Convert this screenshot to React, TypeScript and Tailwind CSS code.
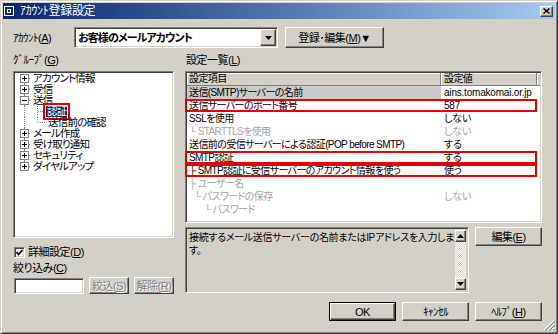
import React from 'react';

const font = "font-['Liberation_Sans','Noto_Sans_CJK_JP',sans-serif] [font-feature-settings:'palt']";
const sunken =
    'border border-t-[#808080] border-l-[#808080] border-b-white border-r-white shadow-[inset_1px_1px_0_#404040,inset_-1px_-1px_0_#d4d0c8]';
const raised =
    'border border-t-white border-l-white border-b-[#404040] border-r-[#404040] shadow-[inset_-1px_-1px_0_#808080] bg-[#d4d0c8]';
const grey = 'text-[#a3a3a3]';

type TreeItem = {
    label: string;
    kind: 'plus' | 'minus' | 'child' | 'lastchild';
    first?: boolean;
    last?: boolean;
    selected?: boolean;
};

const tree: TreeItem[] = [
    { label: 'アカウント情報', kind: 'plus', first: true },
    { label: '受信', kind: 'plus' },
    { label: '送信', kind: 'minus' },
    { label: '認証', kind: 'child', selected: true },
    { label: '送信前の確認', kind: 'lastchild' },
    { label: 'メール作成', kind: 'plus' },
    { label: '受け取り通知', kind: 'plus' },
    { label: 'セキュリティ', kind: 'plus' },
    { label: 'ダイヤルアップ', kind: 'plus', last: true },
];

type Row = {
    name: string;
    value: string;
    indent?: number;
    disabled?: boolean;
    marked?: boolean;
    selected?: boolean;
};

const rows: Row[] = [
    { name: '送信(SMTP)サーバーの名前', value: 'ains.tomakomai.or.jp', selected: true },
    { name: '送信サーバーのポート番号', value: '587', marked: true },
    { name: 'SSLを使用', value: 'しない' },
    { name: '└ STARTTLSを使用', value: 'しない', disabled: true },
    { name: '送信前の受信サーバーによる認証(POP before SMTP)', value: 'する' },
    { name: 'SMTP認証', value: 'する', marked: true },
    { name: '├ SMTP認証に受信サーバーのアカウント情報を使う', value: '使う', marked: true },
    { name: '├ ユーザー名', value: '', disabled: true },
    { name: '└ パスワードの保存', value: 'しない', indent: 5, disabled: true },
    { name: '└ パスワード', value: '', indent: 15, disabled: true },
];

const dot = { stroke: '#808080', strokeWidth: 1, strokeDasharray: '1 1' };

const Gutter: React.FC<{ item: TreeItem }> = ({ item }) => {
    const isChild = item.kind === 'child' || item.kind === 'lastchild';
    if (isChild) {
        return (
            <svg width={30} height={11} className="shrink-0">
                <line x1={8.5} y1={0} x2={8.5} y2={11} {...dot} />
                <line x1={21.5} y1={0} x2={21.5} y2={item.kind === 'lastchild' ? 5.5 : 11} {...dot} />
                <line x1={22} y1={5.5} x2={29} y2={5.5} {...dot} />
            </svg>
        );
    }
    return (
        <svg width={15} height={11} className="shrink-0">
            <line x1={8.5} y1={item.first ? 5.5 : 0} x2={8.5} y2={item.last ? 5.5 : 11} {...dot} />
            <line x1={13} y1={5.5} x2={15} y2={5.5} {...dot} />
            <rect x={4.5} y={1.5} width={8} height={8} fill="#fff" stroke="#808080" />
            <line x1={6} y1={5.5} x2={11} y2={5.5} stroke="#000" />
            {item.kind === 'plus' && <line x1={8.5} y1={3} x2={8.5} y2={8} stroke="#000" />}
        </svg>
    );
};

const Arrow: React.FC<{ up?: boolean }> = ({ up }) => (
    <svg width={7} height={4} viewBox="0 0 7 4">
        <path d={up ? 'M3.5 0 L7 4 L0 4 Z' : 'M0 0 L7 0 L3.5 4 Z'} fill="#000" />
    </svg>
);

const Button: React.FC<{ children: React.ReactNode; className?: string; isDefault?: boolean; disabled?: boolean }> = ({
    children,
    className = '',
    isDefault,
    disabled,
}) => (
    <div className={`${isDefault ? 'border border-black' : ''} ${className}`}>
        <div
            className={`${raised} w-full h-full flex items-center justify-center whitespace-nowrap ${
                disabled ? 'text-[#808080] [text-shadow:1px_1px_0_#fff]' : 'text-black'
            }`}
        >
            {children}
        </div>
    </div>
);

export default function App() {
    return (
        <div className={`${font} w-[558px] h-[334px] relative bg-[#d4d0c8] text-black text-[11px] leading-[12px] tracking-[-0.5px] border border-t-[#d4d0c8] border-l-[#d4d0c8] border-b-[#404040] border-r-[#404040] shadow-[inset_1px_1px_0_#fff,inset_-1px_-1px_0_#808080] flex flex-col overflow-hidden`}>
            {/* title bar */}
            <div className="mx-[2px] mt-[2px] h-[16px] flex items-center bg-linear-to-r from-[#0a246a] to-[#a6caf0] pr-[2px]">
                <div className="ml-[1px] w-[10px] h-[10px] border border-white bg-[#0a246a] flex items-center justify-center">
                    <div className="w-[4px] h-[4px] border border-white" />
                </div>
                <span className="ml-[6px] text-white text-[12px] tracking-[-0.3px]">ｱｶｳﾝﾄ登録設定</span>
                <div className={`${raised} ml-auto w-[13px] h-[11px] flex items-center justify-center`}>
                    <svg width={7} height={6} viewBox="0 0 7 6">
                        <path d="M0.5 0.5 L6.5 5.5 M6.5 0.5 L0.5 5.5" stroke="#000" strokeWidth={1.5} />
                    </svg>
                </div>
            </div>

            <div className="flex-1 flex flex-col pl-[12px] pr-[13px]">
                {/* account row */}
                <div className="mt-[8px] flex items-center h-[21px]">
                    <div className="w-[61px]">
                        ｱｶｳﾝﾄ(<u>A</u>)
                    </div>
                    <div className={`${sunken} w-[204px] h-[21px] bg-white flex items-center`}>
                        <span className="flex-1 pl-[3px] font-bold text-[11px] tracking-[-0.9px] whitespace-nowrap">お客様のメールアカウント</span>
                        <div className={`${raised} w-[16px] h-[17px] mr-px flex items-center justify-center`}>
                            <Arrow />
                        </div>
                    </div>
                    <Button className="ml-[7px] w-[99px] h-[21px]">
                        登録･編集(<u>M</u>)▼
                    </Button>
                </div>

                <div className="mt-[5px] flex">
                    {/* left column */}
                    <div className="w-[161px] flex flex-col">
                        <div className="h-[18px] pt-px">
                            ｸﾞﾙｰﾌﾟ(<u>G</u>)
                        </div>
                        <div className={`${sunken} h-[167px] bg-white pt-px pl-[2px] flex flex-col text-[10.5px] tracking-[-0.8px]`}>
                            {tree.map((item) => (
                                <div key={item.label} className="h-[11px] flex items-center whitespace-nowrap">
                                    <Gutter item={item} />
                                    {item.selected ? (
                                        <span className="bg-[#0a246a] text-white px-px leading-[11px] outline-2 outline-[#e00000] outline-offset-[1px]">
                                            {item.label}
                                        </span>
                                    ) : (
                                        <span className="leading-[11px] pl-[2px]">{item.label}</span>
                                    )}
                                </div>
                            ))}
                        </div>
                        <div className="mt-[8px] h-[12px] flex items-center">
                            <div className={`${sunken} ml-px w-[11px] h-[11px] bg-white flex items-center justify-center`}>
                                <svg width={7} height={7} viewBox="0 0 7 7">
                                    <path d="M0.5 3 L2.5 5.5 L6.5 1" stroke="#000" strokeWidth={1.6} fill="none" />
                                </svg>
                            </div>
                            <span className="ml-[3px]">
                                詳細設定(<u>D</u>)
                            </span>
                        </div>
                        <div className="mt-[4px] h-[12px]">
                            絞り込み(<u>C</u>)
                        </div>
                        <div className="mt-[3px] flex items-center">
                            <div className={`${sunken} ml-px w-[70px] h-[16px] bg-white`} />
                            <Button className="ml-[5px] w-[40px] h-[17px]" disabled>
                                絞込(<u>S</u>)
                            </Button>
                            <Button className="ml-[5px] w-[40px] h-[17px]" disabled>
                                解除(<u>R</u>)
                            </Button>
                        </div>
                    </div>

                    {/* right column */}
                    <div className="ml-[11px] w-[357px] flex flex-col">
                        <div className="h-[18px] pt-px pl-px">
                            設定一覧(<u>L</u>)
                        </div>
                        <div className={`${sunken} h-[152px] bg-white p-px flex flex-col text-[10px] tracking-[-0.6px]`}>
                            <div className="h-[13px] flex shrink-0">
                                <div className="w-[254px] pl-[2px] border-r border-b border-[#808080] shadow-[inset_1px_1px_0_#fff] bg-[#d4d0c8]">
                                    設定項目
                                </div>
                                <div className="w-[96px] pl-[3px] border-r border-b border-[#808080] shadow-[inset_1px_1px_0_#fff] bg-[#d4d0c8]">
                                    設定値
                                </div>
                                <div className="flex-1 border-b border-[#808080] shadow-[inset_1px_1px_0_#fff] bg-[#d4d0c8]" />
                            </div>
                            {rows.map((r) => (
                                <div key={r.name} className={`relative w-[350px] h-[13px] flex items-center whitespace-nowrap ${r.disabled ? grey : ''}`}>
                                    <div
                                        className={`w-[254px] h-full flex items-center overflow-hidden ${r.selected ? 'bg-[#cacaca]' : ''}`}
                                        style={{ paddingLeft: 2 + (r.indent ?? 0) }}
                                    >
                                        {r.name}
                                    </div>
                                    <div className="w-[96px] pl-[3px] overflow-hidden tracking-[-0.2px]">{r.value}</div>
                                    {r.marked && (
                                        <div className="absolute -left-[2px] top-0 right-0 bottom-0 border-2 border-[#e00000] pointer-events-none" />
                                    )}
                                </div>
                            ))}
                        </div>
                        <div className="mt-[4px] flex">
                            <div className={`${sunken} w-[284px] h-[66px] bg-[#d4d0c8] flex p-[2px]`}>
                                <div className="flex-1 pl-px pt-px leading-[13px] text-[10px] tracking-[-0.3px] overflow-hidden whitespace-nowrap">
                                    接続するメール送信サーバーの名前またはIPアドレスを入力しま
                                    <br />
                                    す。
                                </div>
                                <div className="w-[11px] flex flex-col shrink-0">
                                    <div className={`${raised} h-[12px] flex items-center justify-center`}>
                                        <Arrow up />
                                    </div>
                                    <div className="flex-1 bg-[repeating-conic-gradient(#fff_0_25%,#d4d0c8_0_50%)] bg-size-[2px_2px]" />
                                    <div className={`${raised} h-[12px] flex items-center justify-center`}>
                                        <Arrow />
                                    </div>
                                </div>
                            </div>
                            <Button className="ml-[6px] w-[67px] h-[19px]">
                                編集(<u>E</u>)
                            </Button>
                        </div>
                        <div className="mt-[9px] flex justify-end gap-[6px]">
                            <Button className="w-[67px] h-[19px]" isDefault>
                                OK
                            </Button>
                            <Button className="w-[67px] h-[19px]">ｷｬﾝｾﾙ</Button>
                            <Button className="w-[67px] h-[19px]">
                                ﾍﾙﾌﾟ(<u>H</u>)
                            </Button>
                        </div>
                    </div>
                </div>
            </div>

            {/* size grip */}
            <svg width={12} height={12} className="absolute right-[2px] bottom-[2px]">
                <path d="M11 1 L1 11 M11 5 L5 11 M11 9 L9 11" stroke="#fff" />
                <path d="M12 2 L2 12 M12 6 L6 12 M12 10 L10 12" stroke="#808080" />
            </svg>
        </div>
    );
}
